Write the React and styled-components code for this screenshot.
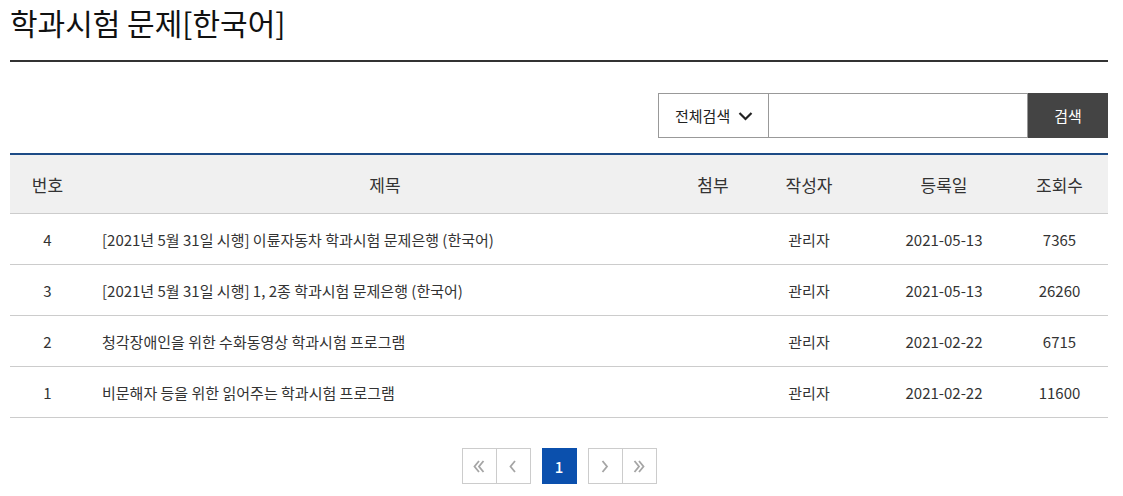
import React from 'react';
import styled, { createGlobalStyle } from 'styled-components';

const GlobalStyle = createGlobalStyle`
    body {
        margin: 0;
        background: #fff;
        font-family: "Noto Sans CJK KR", "Noto Sans", sans-serif;
        color: #333;
    }
`;

const rows = [
    { no: 4, title: '[2021년 5월 31일 시행] 이륜자동차 학과시험 문제은행 (한국어)', writer: '관리자', date: '2021-05-13', hits: 7365 },
    { no: 3, title: '[2021년 5월 31일 시행] 1, 2종 학과시험 문제은행 (한국어)', writer: '관리자', date: '2021-05-13', hits: 26260 },
    { no: 2, title: '청각장애인을 위한 수화동영상 학과시험 프로그램', writer: '관리자', date: '2021-02-22', hits: 6715 },
    { no: 1, title: '비문해자 등을 위한 읽어주는 학과시험 프로그램', writer: '관리자', date: '2021-02-22', hits: 11600 },
];

const cols = [75, 600, 56, 136, 134, 97];

// pager arrows, single or double
const Arrow = ({ dir = 'right', double }) => {
    const d = dir === 'left' ? 'M6 1 L1.5 6.5 L6 12' : 'M1.5 1 L6 6.5 L1.5 12';
    return (
        <svg width={double ? 12 : 8} height="13" viewBox={double ? '0 0 12 13' : '0 0 8 13'}>
            <path d={d} fill="none" stroke="#a5a5a5" strokeWidth="1.8" />
            {double && <path d={d} transform="translate(4.5 0)" fill="none" stroke="#a5a5a5" strokeWidth="1.8" />}
        </svg>
    );
};

export default function App() {
    return (
        <Page>
            <GlobalStyle />
            <Title>학과시험 문제[한국어]</Title>
            <SearchBar>
                <Select>
                    전체검색
                    <svg width="15" height="10" viewBox="0 0 15 10">
                        <path d="M1.5 2 L7.5 8 L13.5 2" fill="none" stroke="#222" strokeWidth="2.2" />
                    </svg>
                </Select>
                <Input />
                <SearchButton>검색</SearchButton>
            </SearchBar>
            <Table>
                <colgroup>
                    {cols.map((w, i) => <col key={i} style={{ width: w }} />)}
                </colgroup>
                <thead>
                    <tr>
                        <Th>번호</Th>
                        <Th>제목</Th>
                        <Th>첨부</Th>
                        <Th>작성자</Th>
                        <Th>등록일</Th>
                        <Th>조회수</Th>
                    </tr>
                </thead>
                <tbody>
                    {rows.map((r) => (
                        <tr key={r.no}>
                            <Td>{r.no}</Td>
                            <Td left>{r.title}</Td>
                            <Td />
                            <Td>{r.writer}</Td>
                            <Td>{r.date}</Td>
                            <Td>{r.hits}</Td>
                        </tr>
                    ))}
                </tbody>
            </Table>
            <Pager>
                <PageGroup>
                    <PageButton><Arrow dir="left" double /></PageButton>
                    <PageButton><Arrow dir="left" /></PageButton>
                </PageGroup>
                <PageButton active>1</PageButton>
                <PageGroup>
                    <PageButton><Arrow dir="right" /></PageButton>
                    <PageButton><Arrow dir="right" double /></PageButton>
                </PageGroup>
            </Pager>
        </Page>
    );
}

const Page = styled.div`
    width: 1098px;
    padding: 0 15px 0 10px;
`;

const Title = styled.h2`
    margin: 0;
    padding: 1px 0 17px;
    font-size: 30px;
    font-weight: 400;
    line-height: 42px;
    color: #111;
    border-bottom: 2px solid #333;
`;

const SearchBar = styled.div`
    display: flex;
    justify-content: flex-end;
    margin-top: 31px;
    height: 45px;
`;

const Select = styled.div`
    display: flex;
    align-items: center;
    gap: 8px;
    box-sizing: border-box;
    width: 110px;
    padding-left: 16px;
    border: 1px solid #999;
    border-right: none;
    font-size: 15px;
    color: #222;
`;

const Input = styled.div`
    box-sizing: border-box;
    width: 260px;
    border: 1px solid #999;
    background: #fff;
`;

const SearchButton = styled.button`
    width: 80px;
    border: none;
    background: #444;
    color: #fff;
    font-family: inherit;
    font-size: 15px;
`;

const Table = styled.table`
    width: 100%;
    margin-top: 15px;
    border-collapse: collapse;
    table-layout: fixed;
    border-top: 2px solid #1d4b86;
`;

const Th = styled.th`
    height: 58px;
    padding: 0;
    background: #f0f0f0;
    border-bottom: 1px solid #ccc;
    font-size: 17px;
    font-weight: 400;
    color: #333;
    text-align: center;
`;

const Td = styled.td`
    height: 50px;
    padding: ${(p) => (p.left ? '0 0 0 17px' : '0')};
    border-bottom: 1px solid #ccc;
    font-size: 15px;
    color: #333;
    text-align: ${(p) => (p.left ? 'left' : 'center')};
`;

const Pager = styled.div`
    display: flex;
    justify-content: center;
    gap: 11px;
    margin-top: 30px;
`;

const PageGroup = styled.div`
    display: flex;
    & > * + * {
        margin-left: -1px;
    }
`;

const PageButton = styled.div`
    display: flex;
    align-items: center;
    justify-content: center;
    box-sizing: border-box;
    width: 35px;
    height: 36px;
    border: 1px solid ${(p) => (p.active ? '#0b50ad' : '#ccc')};
    background: ${(p) => (p.active ? '#0b50ad' : '#fff')};
    color: #fff;
    font-size: 15px;
    font-weight: 500;
`;
